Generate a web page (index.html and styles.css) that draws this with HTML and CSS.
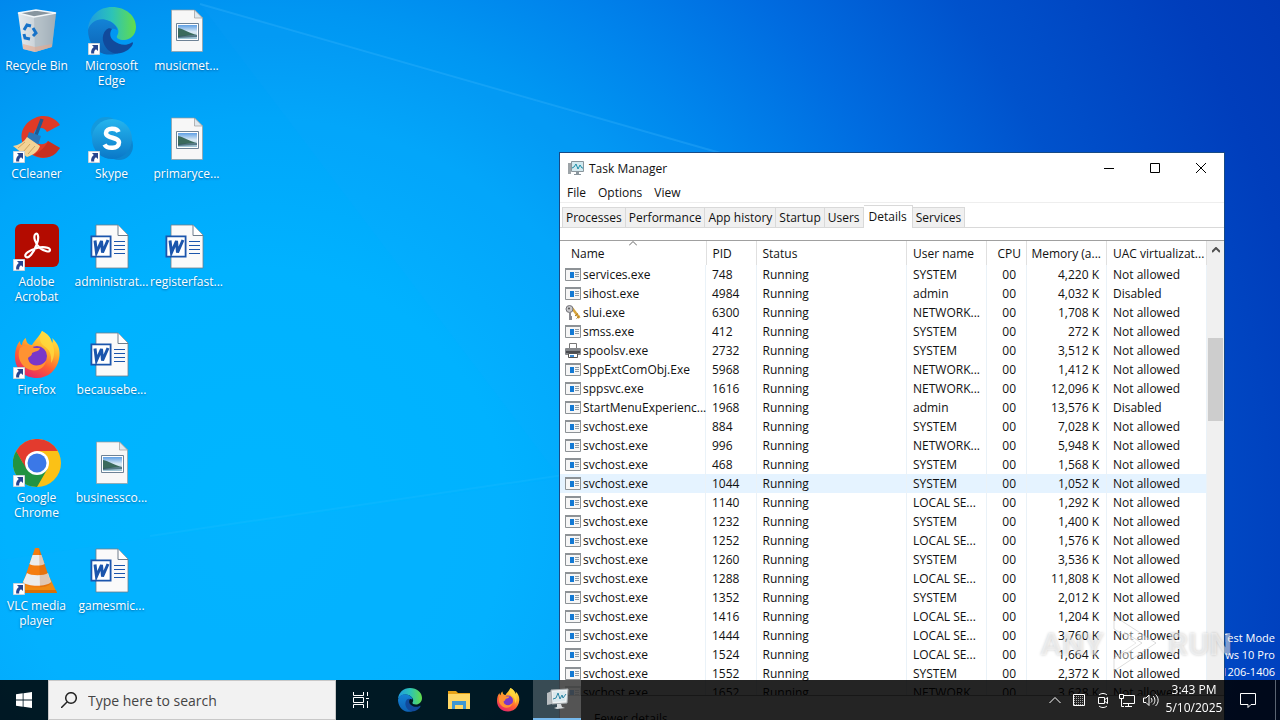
FILE: index.html
```html
<!DOCTYPE html>
<html lang="en">
<head>
    <meta charset="UTF-8">
    <meta name="viewport" content="width=device-width, initial-scale=1.0">
    <title>Desktop</title>
    <link rel="stylesheet" href="styles.css">
</head>
<body>

<!-- shared icons -->
<svg class="defs" aria-hidden="true">
    <defs>
        <linearGradient id="bin" x1="0" x2="1"><stop offset="0" stop-color="#e4eaee"/><stop offset=".6" stop-color="#c3ccd3"/><stop offset="1" stop-color="#93a3ae"/></linearGradient>
        <linearGradient id="edgeTop" x1="0" x2="1"><stop offset="0" stop-color="#1e9be0"/><stop offset=".5" stop-color="#2cc3b8"/><stop offset="1" stop-color="#63dd4a"/></linearGradient>
        <linearGradient id="edgeMid" x1="0" y1="0" x2="0" y2="1"><stop offset="0" stop-color="#1383d6"/><stop offset="1" stop-color="#0d62b4"/></linearGradient>
        <linearGradient id="skype" x1="0" y1="0" x2="0" y2="1"><stop offset="0" stop-color="#25b5ee"/><stop offset="1" stop-color="#0a78c8"/></linearGradient>
        <linearGradient id="fox" x1=".8" y1="0" x2=".3" y2="1"><stop offset="0" stop-color="#fff04a"/><stop offset=".35" stop-color="#ffb52b"/><stop offset=".65" stop-color="#ff5f33"/><stop offset="1" stop-color="#e3256b"/></linearGradient>
        <linearGradient id="photo" x1="0" y1="0" x2="0" y2="1"><stop offset="0" stop-color="#5f9fe4"/><stop offset=".5" stop-color="#dcebf5"/><stop offset="1" stop-color="#9cc4d4"/></linearGradient>
    </defs>
    <symbol id="i-shortcut" viewBox="0 0 12 12">
        <path fill="#fff" stroke="#c9d3dc" d="M.5.5h11v11H.5z"/>
        <path fill="#27458f" d="M4 2h6v6L8 6.300C6.500 7.200 6 8.500 6.200 10.500H3.200C2.800 7.500 3.800 5.400 5.800 4z"/>
    </symbol>
    <symbol id="i-bin" viewBox="0 0 48 48">
        <path fill="url(#bin)" d="M5 6l16 4 22-4-4 34-17 5-12-3z"/>
        <path fill="#a9b5be" opacity=".6" d="M21 10l22-4-4 34-17 5z"/>
        <path fill="#87959f" d="M5 6l18-3 20 3-22 4z"/>
        <path fill="none" stroke="#f3f7fa" stroke-width="1.500" d="M5 6l18-3 20 3-22 4z"/>
        <path fill="#e8a88c" opacity=".6" d="M10 37l12 3 17-3-.5 3-16.500 5-12-3z"/>
        <g fill="none" stroke="#1672c8" stroke-width="3"><path d="M11 23l3-5 4 1M20 21l3 5-3 3M17 32l-5-1-1-4"/></g>
    </symbol>
    <symbol id="i-edge" viewBox="0 0 48 48">
        <path fill="url(#edgeTop)" d="M0 22C1 9 11 0 24 0c14 0 24 9 24 20 0 8-6 13-12 13-5 0-8-2-7-4 2-3 2-7-1-10-6-8-22-9-28 3z"/>
        <path fill="url(#edgeMid)" d="M0 23c3-10 13-13 21-9 5 2 8 6 8 9-5-3-11 0-11 7 0 8 6 14 14 15-4 3-11 3-16 2C6 44 0 34 0 23z"/>
        <path fill="#114a9c" d="M18 23c-5 5-4 14 2 20 6 5 13 4 18 1 4-2 7-6 7-8 0-1-1-1-2 0-5 3-12 2-17-2-4-3-5-8-2-12-2-1-4-1-6 1z"/>
    </symbol>
    <symbol id="i-picture" viewBox="0 0 48 48">
        <path fill="#f7f7f7" stroke="#9b9b9b" stroke-width=".7" d="M8.500 3h23l8 8v33.500h-31z"/>
        <path fill="#dfe8ee" stroke="#9b9b9b" stroke-width=".7" d="M31.500 3v8h8z"/>
        <path fill="#fff" stroke="#6d8296" d="M13.500 16.500h22v17h-22z"/>
        <path fill="url(#photo)" d="M15 18h19v14H15z"/>
        <path fill="#3b6a5c" d="M15 21c6 1 11 5 19 7l-12 1-7 1z"/>
        <path fill="#2c5160" d="M15 29l19-1v2l-19 1z" opacity=".7"/>
    </symbol>
    <symbol id="i-word" viewBox="0 0 48 48">
        <path fill="#fafafa" stroke="#6f7d8c" stroke-width=".8" d="M8 2h22l10 10v33H8z"/>
        <path fill="#fff" stroke="#6f7d8c" d="M30 2v10.500h10"/>
        <path fill="#fff" stroke="#1b55ac" stroke-width="1.800" d="M3.400 13.400h19.200v20.200H3.400z"/>
        <path fill="none" stroke="#1b55ac" stroke-width="3" d="M7 17.500l1.500 12L13.500 18l1 11.500L20 17"/>
        <path stroke="#1b55ac" d="M26 18.500h11M26 22.500h11M26 26.500h11M26 30.500h11"/>
    </symbol>
    <symbol id="i-ccleaner" viewBox="0 0 48 48">
        <path fill="#df3a26" d="M47 10C41 1 30-1 22 3 10 8 5 20 11 31c6 12 22 16 32 7l4-5-12-7c-4 5-11 4-13-1-3-6 0-12 5-12 4 0 5 1 7 4z"/>
        <path fill="#b82a1c" opacity=".6" d="M21 40c8 4 17 3 22-2l4-5-12-7c-3 7-8 10-14 14z"/>
        <path fill="none" stroke="#24588f" stroke-width="3.500" d="M29 4l-6 16"/>
        <path fill="#2b76b8" d="M16 17l12 4-3 9-11-7z"/>
        <path fill="#f3d395" d="M14 22l13 9c-2 6-7 9-13 11L0 31c6-1 11-4 14-9z"/>
        <path fill="none" stroke="#cfa662" d="M12 27l-7 6M17 29l-7 8M22 31l-7 8"/>
    </symbol>
    <symbol id="i-skype" viewBox="0 0 48 48">
        <circle cx="18" cy="17" r="15" fill="#1399dd"/>
        <circle cx="31" cy="31" r="14" fill="#0c85cf"/>
        <circle cx="24" cy="24" r="20" fill="url(#skype)"/>
        <path fill="none" stroke="#fff" stroke-width="4.500" d="M30.500 17C29 12.500 18 12.500 18 18c0 6 13 3.500 13 9.500 0 7-12 6.500-14.500 2"/>
    </symbol>
    <symbol id="i-acrobat" viewBox="0 0 48 48">
        <rect x="2" y="1" width="44" height="43" rx="6" fill="#b30b00"/>
        <path fill="none" stroke="#fff" stroke-width="2.200" d="M13 34c-3-3 4-7 11-9 5-1.500 13-1 13 2s-6 1-10-2c-5-4-7-12-4.500-14s4 4 1 11c-3 8-8 14-10.500 12z"/>
    </symbol>
    <symbol id="i-firefox" viewBox="0 0 48 48">
        <path fill="url(#fox)" d="M29 0c6 3 9 7 10 12 1-1 1-3 0-5 6 5 9 12 7 21-2 11-11 19-22 19C11 47 2 38 2 26 2 19 4 13 7 10c0 3 1 4 2 4 0-3 2-6 4-7 0 4 2 7 6 7 3-5 6-7 10-14z"/>
        <circle cx="24" cy="25" r="10" fill="#7a37c8"/>
        <path fill="#ff9332" d="M7 17c5-4 11-3 14 0h6c-1 4-5 3-8 5 0 3-2 3-4 5 1 9 12 10 18 3-2 9-12 12-20 7-7-5-9-13-6-20z"/>
        <path fill="#ffda3e" d="M29 0c6 3 9 7 10 12 3 6 3 14-1 20 1-9-2-14-7-17-5-4-5-9-2-15z" opacity=".8"/>
    </symbol>
    <symbol id="i-chrome" viewBox="0 0 48 48">
        <circle cx="24" cy="24" r="24" fill="#fbc116"/>
        <path fill="#e33b2e" d="M3.200 12A24 24 0 0 1 44.800 12H24L13.600 30z"/>
        <path fill="#229342" d="M3.200 12A24 24 0 0 0 24 48l10.400-18L24 24H10z"/>
        <path fill="#e33b2e" d="M3.200 12L13.600 30 24 24V12z"/>
        <circle cx="24" cy="24" r="12" fill="#fff"/>
        <circle cx="24" cy="24" r="9.500" fill="#3b78e7"/>
    </symbol>
    <symbol id="i-vlc" viewBox="0 0 48 48">
        <path fill="#f08a12" d="M12 31h25l7 15H5z"/>
        <path fill="#d96f08" d="M5 43h38l1 3H5z"/>
        <path fill="#f47d10" d="M22 1h4l12 35c-4 6-24 6-28 0z"/>
        <path fill="#ececec" d="M19.500 8h9l3 9c-3 2-12 2-15 0zM14 26c4 3 17 3 21 0l3 9c-4 5-24 5-28 0z"/>
        <path fill="#bb5605" opacity=".25" d="M26 1l12 35c-2 3-7 4-11 4z"/>
    </symbol>
    <symbol id="i-exe" viewBox="0 0 16 16">
        <path fill="#f6f6f6" stroke="#8d9296" d="M.5 1.500h15v12H.5z"/>
        <path fill="#8d9296" d="M0 1h16v2H0z"/>
        <path fill="#1279d4" d="M5 5h4v6H5z"/>
        <path stroke="#8f9ba5" d="M10 5.500h4M10 7.500h4M10 9.500h4"/>
    </symbol>
    <symbol id="i-keys" viewBox="0 0 16 16">
        <path fill="none" stroke="#d9a63c" stroke-width="2.500" d="M7 3l7.500 10"/>
        <path stroke="#a87520" d="M10 11l3-2.500M11.500 13.500l3-2.500"/>
        <circle cx="4.500" cy="4" r="3.500" fill="#c7c7cb" stroke="#737378"/>
        <path fill="none" stroke="#8a8a90" stroke-width="2" d="M5 7v8M5 12h2M5 14h2"/>
        <circle cx="4" cy="3.500" r="1" fill="#555"/>
    </symbol>
    <symbol id="i-printer" viewBox="0 0 16 16">
        <path fill="#fff" stroke="#777" d="M4.500.500h7V6h-7z"/>
        <rect y="5" width="16" height="7" rx="1" fill="#85888c"/>
        <path fill="#4a4c50" d="M1 8h14v2H1z"/>
        <path fill="#fff" stroke="#555" d="M3.500 10.500h9v4h-9z"/>
        <path fill="#3b8bd3" d="M5 12h4v2H5z"/>
    </symbol>
    <symbol id="i-taskmgr" viewBox="0 0 16 16">
        <path fill="#9da4a8" d="M0 3h3v11H0z"/>
        <path fill="#d3e9ef" stroke="#8a969d" d="M3.500 1.500h12v10h-12z"/>
        <path fill="none" stroke="#1d8fa8" d="M4 8l2-1 2-3 2 5 2-4 2 3h1"/>
        <path fill="#8a969d" d="M8 12h3v2h2v1H6v-1h2z"/>
    </symbol>
    <symbol id="i-taskmgr-large" viewBox="0 0 24 24">
        <path fill="#b9bec1" d="M2 6l5-2v13l-5 1z"/>
        <path fill="#eef1f2" stroke="#a4aaad" d="M6 3l17-1-1 14-15 1z"/>
        <path fill="#dbe8ec" d="M8 5l13-1-1 10-12 1z"/>
        <path fill="none" stroke="#2c86a5" d="M8 12l3-1 2-5 2 6 2-4 1 3 3-4"/>
        <path fill="#d8dcde" d="M12 17h4l1 3 3 1-8 1-3-1 3-1z"/>
    </symbol>
</svg>

<main class="desktop">
    <svg class="beams" viewBox="0 0 1280 720" preserveAspectRatio="none" aria-hidden="true">
        <path fill="#20a8ff" opacity=".08" d="M200 4L724 154v566H0V560l560-82z"/>
        <path fill="none" stroke="#4cc0ff" stroke-width="2" opacity=".25" d="M200 4l524 150"/>
        <path fill="none" stroke="#5ccaff" stroke-width="2" opacity=".1" d="M150 536l420-62"/>
    </svg>

    <div class="shortcuts" id="shortcuts"></div>

    <div class="build">
        <p>Test Mode</p>
        <p>Windows 10 Pro</p>
        <p>Build 19041.vb_release.191206-1406</p>
    </div>

    <section class="window">
        <header class="titlebar">
            <svg class="icon16"><use href="#i-taskmgr"/></svg>
            <h1>Task Manager</h1>
            <div class="controls">
                <button aria-label="Minimize"><svg viewBox="0 0 10 10"><path d="M0 5.500h10"/></svg></button>
                <button aria-label="Maximize"><svg viewBox="0 0 10 10"><path d="M.5.5h9v9h-9z"/></svg></button>
                <button aria-label="Close"><svg viewBox="0 0 10 10"><path d="M0 0l10 10M10 0L0 10"/></svg></button>
            </div>
        </header>
        <nav class="menu">
            <button>File</button>
            <button>Options</button>
            <button>View</button>
        </nav>
        <div class="tabs">
            <button>Processes</button>
            <button>Performance</button>
            <button>App history</button>
            <button>Startup</button>
            <button>Users</button>
            <button class="active">Details</button>
            <button>Services</button>
        </div>
        <div class="list">
            <table>
                <colgroup>
                    <col class="c-name"><col class="c-pid"><col><col class="c-user"><col class="c-cpu"><col class="c-mem"><col class="c-uac">
                </colgroup>
                <thead>
                    <tr>
                        <th class="sorted">Name<svg viewBox="0 0 8 5"><path d="M0 4.500l4-4 4 4"/></svg></th>
                        <th>PID</th>
                        <th>Status</th>
                        <th>User name</th>
                        <th class="num-head">CPU</th>
                        <th class="num-head">Memory (a...</th>
                        <th>UAC virtualizat...</th>
                    </tr>
                </thead>
                <tbody id="rows"></tbody>
            </table>
            <div class="scrollbar">
                <svg viewBox="0 0 8 6"><path d="M0 5l4-4 4 4"/></svg>
                <div class="thumb"></div>
            </div>
        </div>
        <footer class="details"><button>Fewer details</button></footer>
    </section>

    <div class="watermark">
        <span>ANY</span>
        <svg viewBox="0 0 56 60"><path d="M6 2l42 27L6 57V44l22-15L6 15z"/><path d="M16 18l18 11-18 12"/></svg>
        <span>RUN</span>
    </div>
</main>

<footer class="taskbar">
    <button class="start" aria-label="Start"><svg viewBox="0 0 16 16"><path d="M0 2.300l6.700-1v6.200H0zM7.500 1.200L16 0v7.500H7.500zM0 8.400h6.700v6.300L0 13.700zM7.500 8.400H16V16l-8.500-1.200z"/></svg></button>
    <label class="search">
        <svg viewBox="0 0 16 16"><circle cx="10" cy="6" r="5.300"/><path d="M6 10l-6 6"/></svg>
        <input type="text" placeholder="Type here to search">
    </label>
    <div class="apps">
        <button aria-label="Task View"><svg class="line" viewBox="0 0 16 16"><path d="M.5 0v3.500h10V0M.5 16v-3.500h10V16M.5 5.500h10v5H.5zM14.500 0v4M14.500 9v7M13 6.500h3"/></svg></button>
        <button aria-label="Microsoft Edge"><svg><use href="#i-edge"/></svg></button>
        <button aria-label="File Explorer"><svg viewBox="0 0 24 24"><path fill="#e8a317" d="M1 3h8l2 2h12v4H1z"/><path fill="#ffd766" d="M1 6h22v15H1z"/><path fill="#3f97d3" d="M5 13h14v8h-3v-4H8v4H5z"/></svg></button>
        <button aria-label="Firefox"><svg><use href="#i-firefox"/></svg></button>
        <button class="running" aria-label="Task Manager"><svg><use href="#i-taskmgr-large"/></svg></button>
    </div>
    <div class="tray">
        <button aria-label="Show hidden icons"><svg viewBox="0 0 16 16"><path d="M2.500 11L8 5.500l5.500 5.500"/></svg></button>
        <button aria-label="Touch keyboard"><svg viewBox="0 0 16 16"><path d="M2.500 2.500h11v11h-11z"/><path stroke-dasharray="1 1" opacity=".6" d="M3 4.500h10M3 6.500h10M3 8.500h10M3 10.500h10M3 12.500h10"/></svg></button>
        <button aria-label="Meet Now"><svg viewBox="0 0 16 16"><path d="M3.500 5.500h6v6h-6zM10 7.500l2.500-2v6L10 9.500M4 3c2-2 6-2 8 0M4 14c2 2 6 2 8 0"/></svg></button>
        <button aria-label="Network"><svg viewBox="0 0 16 16"><path d="M4.500 3.500h11v8H4M9.500 12v2.500M6 14.500h7M.5 2.500h4v4h-4zM2.500 7v7.500H5"/></svg></button>
        <button aria-label="Volume"><svg viewBox="0 0 16 16"><path d="M.5 6v4.500H3l3 3V3L3 6zM8 6c1.300 1 1.300 3.500 0 4.500M10 4c2.500 2 2.500 6.500 0 8.500M12.500 2.500c3.500 3 3.500 8.500 0 11.500"/></svg></button>
        <div class="clock"><time>3:43 PM</time><time>5/10/2025</time></div>
        <button class="notify" aria-label="Notifications"><svg viewBox="0 0 16 16"><path d="M.5 1.500h15v11H11l-3 3v-3H.5z"/></svg></button>
        <button class="peek" aria-label="Show desktop"></button>
    </div>
</footer>

<script>
    // icon, label, has shortcut arrow - listed column by column
    const shortcuts = [
        ['bin', 'Recycle Bin'],
        ['ccleaner', 'CCleaner', true],
        ['acrobat', 'Adobe Acrobat', true],
        ['firefox', 'Firefox', true],
        ['chrome', 'Google Chrome', true],
        ['vlc', 'VLC media player', true],
        ['edge', 'Microsoft Edge', true],
        ['skype', 'Skype', true],
        ['word', 'administrat...'],
        ['word', 'becausebe...'],
        ['picture', 'businessco...'],
        ['word', 'gamesmic...'],
        ['picture', 'musicmet...'],
        ['picture', 'primaryce...'],
        ['word', 'registerfast...']
    ];

    const processes = [
        ['services.exe', 748, 'SYSTEM', '4,220'],
        ['sihost.exe', 4984, 'admin', '4,032'],
        ['slui.exe', 6300, 'NETWORK...', '1,708', 'keys'],
        ['smss.exe', 412, 'SYSTEM', '272'],
        ['spoolsv.exe', 2732, 'SYSTEM', '3,512', 'printer'],
        ['SppExtComObj.Exe', 5968, 'NETWORK...', '1,412'],
        ['sppsvc.exe', 1616, 'NETWORK...', '12,096'],
        ['StartMenuExperienc...', 1968, 'admin', '13,576'],
        ['svchost.exe', 884, 'SYSTEM', '7,028'],
        ['svchost.exe', 996, 'NETWORK...', '5,948'],
        ['svchost.exe', 468, 'SYSTEM', '1,568'],
        ['svchost.exe', 1044, 'SYSTEM', '1,052'],
        ['svchost.exe', 1140, 'LOCAL SE...', '1,292'],
        ['svchost.exe', 1232, 'SYSTEM', '1,400'],
        ['svchost.exe', 1252, 'LOCAL SE...', '1,576'],
        ['svchost.exe', 1260, 'SYSTEM', '3,536'],
        ['svchost.exe', 1288, 'LOCAL SE...', '11,808'],
        ['svchost.exe', 1352, 'SYSTEM', '2,012'],
        ['svchost.exe', 1416, 'LOCAL SE...', '1,204'],
        ['svchost.exe', 1444, 'LOCAL SE...', '3,760'],
        ['svchost.exe', 1524, 'LOCAL SE...', '1,664'],
        ['svchost.exe', 1552, 'SYSTEM', '2,372'],
        ['svchost.exe', 1652, 'NETWORK...', '3,628']
    ];

    document.getElementById('shortcuts').innerHTML = shortcuts.map(([icon, label, arrow]) => `
        <a class="shortcut" href="#">
            <span class="picture">
                <svg class="icon48"><use href="#i-${icon}"/></svg>
                ${arrow ? '<svg class="arrow"><use href="#i-shortcut"/></svg>' : ''}
            </span>
            <span>${label}</span>
        </a>`).join('');

    document.getElementById('rows').innerHTML = processes.map(([name, pid, user, mem, icon]) => `
        <tr class="${pid === 1044 ? 'hover' : ''}">
            <td class="name"><svg class="icon16"><use href="#i-${icon || 'exe'}"/></svg>${name}</td>
            <td>${pid}</td>
            <td>Running</td>
            <td>${user}</td>
            <td class="num cpu">00</td>
            <td class="num">${mem} K</td>
            <td>${user === 'admin' ? 'Disabled' : 'Not allowed'}</td>
        </tr>`).join('');
</script>

</body>
</html>
```
FILE: styles.css
```css
* {
    box-sizing: border-box;
}
body {
    margin: 0;
    height: 100vh;
    overflow: hidden;
    font-family: "Open Sans", "Noto Sans", sans-serif;
    font-size: 12px;
    color: #111;
}
button, input {
    font: inherit;
    color: inherit;
    border: none;
    background: none;
    padding: 0;
}
h1, p {
    margin: 0;
    font-size: inherit;
    font-weight: normal;
}
.defs {
    position: absolute;
    width: 0;
    height: 0;
}
.icon16 {
    width: 16px;
    height: 16px;
    flex: none;
}

/* desktop */
.desktop {
    position: relative;
    height: 100vh;
    background: radial-gradient(circle at 20% 72%, #00b6ff 0, #00b2ff 250px, #00a6fa 400px, #0096f2 510px, #0084ec 600px, #006ce0 720px, #0052cc 870px, #003ebc 1060px, #0036b2 1200px);
}
.beams {
    position: absolute;
    width: 100%;
    height: 100%;
}
.shortcuts {
    position: relative;
    display: grid;
    grid-template-rows: repeat(6, 108px);
    grid-auto-flow: column;
    grid-auto-columns: 75px;
    margin-left: -1px;
}
.shortcut {
    display: flex;
    flex-direction: column;
    align-items: center;
    padding-top: 7px;
    gap: 3px;
    color: #fff;
    line-height: 15px;
    text-align: center;
    text-decoration: none;
    text-shadow: 0 1px 2px rgba(0, 40, 90, 0.5);
}
.picture {
    position: relative;
    height: 48px;
}
.icon48 {
    width: 48px;
    height: 48px;
}
.arrow {
    position: absolute;
    left: 0;
    bottom: 0;
    width: 12px;
    height: 12px;
}
.build {
    position: absolute;
    right: 5px;
    bottom: 40px;
    color: #fff;
    font-size: 11px;
    line-height: 17px;
    text-align: right;
}

/* task manager */
.window {
    position: absolute;
    top: 152px;
    right: 55px;
    bottom: -17px;
    width: 666px;
    display: flex;
    flex-direction: column;
    background: #fff;
    border: 1px solid #174a86;
}
.titlebar {
    display: flex;
    align-items: center;
    height: 30px;
    padding-left: 8px;
    gap: 5px;
}
.controls {
    display: flex;
    margin-left: auto;
}
.controls button {
    width: 46px;
    height: 30px;
}
.controls svg {
    width: 10px;
    height: 10px;
    fill: none;
    stroke: #000;
    overflow: visible;
}
.menu {
    display: flex;
    height: 20px;
    padding-left: 7px;
    gap: 12px;
    border-bottom: 1px solid #eee;
}
.tabs {
    display: flex;
    align-items: flex-end;
    height: 25px;
    padding-left: 2px;
    border-bottom: 1px solid #d9d9d9;
}
.tabs button {
    height: 20px;
    padding: 0 3px;
    background: #f0f0f0;
    border: 1px solid #d9d9d9;
    border-bottom: none;
    border-left: none;
}
.tabs button:first-child {
    border-left: 1px solid #d9d9d9;
}
.tabs .active {
    height: 23px;
    margin-bottom: -1px;
    padding: 0 5px 2px;
    background: #fff;
}
.list {
    flex: 1;
    min-height: 0;
    display: flex;
    align-items: flex-start;
    margin-top: 12px;
    overflow: hidden;
    border-top: 1px solid #a0a0a0;
    border-bottom: 1px solid #a0a0a0;
}
table {
    width: 100%;
    table-layout: fixed;
    border-collapse: collapse;
    white-space: nowrap;
}
.c-name { width: 146px; }
.c-pid { width: 50px; }
.c-user { width: 80px; }
.c-cpu { width: 40px; }
.c-mem { width: 80px; }
.c-uac { width: 100px; }
th, td {
    padding: 0 0 0 6px;
    font-weight: normal;
    text-align: left;
    border-right: 1px solid #eaf2f8;
}
th {
    height: 24px;
    border-right-color: #e0e0e0;
}
td {
    height: 19px;
    line-height: 18px;
}
.sorted {
    position: relative;
    padding-left: 11px;
}
.sorted svg {
    position: absolute;
    top: 0;
    left: 69px;
    width: 8px;
    height: 5px;
    fill: none;
    stroke: #666;
}
.num-head {
    text-align: right;
    padding: 0 5px 0 0;
}
.name {
    display: flex;
    align-items: center;
    gap: 2px;
    padding-left: 5px;
}
.num {
    text-align: right;
    padding: 0 7px 0 0;
}
.cpu {
    padding-right: 10px;
}
.hover {
    background: #e5f3ff;
}
.scrollbar {
    align-self: stretch;
    flex: none;
    width: 17px;
    padding-top: 6px;
    background: #f0f0f0;
}
.scrollbar svg {
    display: block;
    width: 8px;
    height: 6px;
    margin: 0 auto;
    fill: none;
    stroke: #505050;
    stroke-width: 2;
}
.thumb {
    height: 83px;
    margin: 85px 1px 0;
    background: #cdcdcd;
}
.details {
    height: 40px;
    padding: 14px 34px;
}

/* video watermark */
.watermark {
    position: absolute;
    right: 48px;
    bottom: 46px;
    display: flex;
    align-items: center;
    gap: 4px;
    font-family: Roboto, "Liberation Sans", sans-serif;
    font-size: 32px;
    font-weight: bold;
    color: rgba(255, 255, 255, 0.5);
    text-shadow: 0 0 3px rgba(0, 0, 0, 0.2);
    pointer-events: none;
}
.watermark svg {
    width: 56px;
    height: 60px;
    fill: rgba(255, 255, 255, 0.4);
    stroke: rgba(140, 140, 140, 0.3);
}

/* taskbar */
.taskbar {
    position: fixed;
    left: 0;
    right: 0;
    bottom: 0;
    display: flex;
    height: 40px;
    background: rgba(0, 0, 0, 0.86);
    color: #fff;
}
.taskbar button {
    display: flex;
    align-items: center;
    justify-content: center;
}
.start {
    width: 48px;
}
.start svg {
    width: 16px;
    height: 16px;
    fill: #fff;
}
.search {
    display: flex;
    align-items: center;
    width: 288px;
    padding-left: 12px;
    gap: 11px;
    background: #f2f2f2;
    border: 1px solid #c8c8c8;
}
.search svg {
    width: 16px;
    height: 16px;
    fill: none;
    stroke: #222;
    stroke-width: 1.5;
}
.search input {
    flex: 1;
    min-width: 0;
    font-size: 14px;
    outline: none;
}
.search input::placeholder {
    color: #444;
    opacity: 1;
}
.apps {
    display: flex;
    gap: 1px;
    padding-left: 1px;
}
.apps button {
    width: 48px;
}
.apps svg {
    width: 24px;
    height: 24px;
}
.apps .line {
    width: 16px;
    height: 16px;
    fill: none;
    stroke: #fff;
}
.apps .running {
    background: rgba(255, 255, 255, 0.22);
    border-bottom: 2px solid #76b9ed;
}
.tray {
    display: flex;
    margin-left: auto;
}
.tray button {
    width: 24px;
}
.tray svg {
    width: 16px;
    height: 16px;
    fill: none;
    stroke: #fff;
}
.clock {
    display: flex;
    flex-direction: column;
    align-items: center;
    width: 62px;
    padding-top: 1px;
    line-height: 18px;
}
.tray .notify {
    width: 45px;
}
.tray .peek {
    width: 5px;
    margin-left: 5px;
    border-left: 1px solid #5a6472;
}
```
